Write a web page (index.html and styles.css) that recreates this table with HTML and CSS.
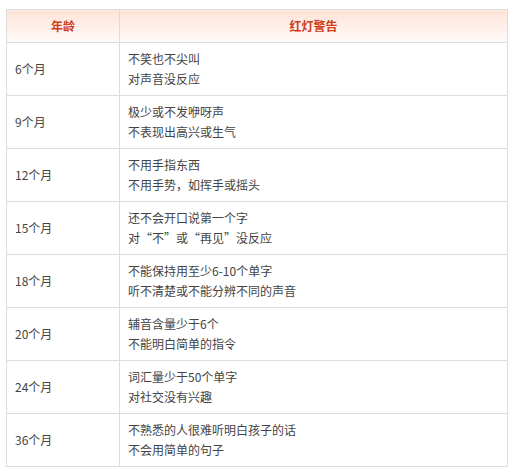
FILE: index.html
```html
<!DOCTYPE html>
<html lang="zh">
<head>
<meta charset="utf-8">
<link rel="stylesheet" href="styles.css">
</head>
<body>
<table class="warn">
  <colgroup><col class="c-age"><col class="c-msg"></colgroup>
  <thead>
    <tr><th>年龄</th><th>红灯警告</th></tr>
  </thead>
  <tbody>
    <tr><td>6个月</td><td>不笑也不尖叫<br>对声音没反应</td></tr>
    <tr><td>9个月</td><td>极少或不发咿呀声<br>不表现出高兴或生气</td></tr>
    <tr><td>12个月</td><td>不用手指东西<br>不用手势，如挥手或摇头</td></tr>
    <tr><td>15个月</td><td>还不会开口说第一个字<br>对“不”或“再见”没反应</td></tr>
    <tr><td>18个月</td><td>不能保持用至少6-10个单字<br>听不清楚或不能分辨不同的声音</td></tr>
    <tr><td>20个月</td><td>辅音含量少于6个<br>不能明白简单的指令</td></tr>
    <tr><td>24个月</td><td>词汇量少于50个单字<br>对社交没有兴趣</td></tr>
    <tr><td>36个月</td><td>不熟悉的人很难听明白孩子的话<br>不会用简单的句子</td></tr>
  </tbody>
</table>
</body>
</html>
```
FILE: styles.css
```css
html, body {
  margin: 0;
  padding: 0;
  background: #fff;
}
body {
  padding: 9px 0 0 6px;
  font-family: "Microsoft YaHei", "Noto Sans CJK SC", sans-serif;
  font-size: 12px;
  color: #444;
}
.warn {
  border-collapse: collapse;
  table-layout: fixed;
  width: 502px;
}
.c-age { width: 113px; }
.warn th, .warn td {
  border: 1px solid #dcdcdc;
  padding: 0 8px;
  vertical-align: middle;
}
.warn th {
  height: 33px;
  box-sizing: border-box;
  background: linear-gradient(to bottom, #fde3d8 0%, #fff4ef 70%, #fffaf8 100%);
  color: #cf3d17;
  font-weight: bold;
  text-align: center;
  font-size: 12px;
  line-height: 16px;
}
.warn td {
  height: 53px;
  box-sizing: border-box;
  line-height: 20px;
  text-align: left;
}
```
